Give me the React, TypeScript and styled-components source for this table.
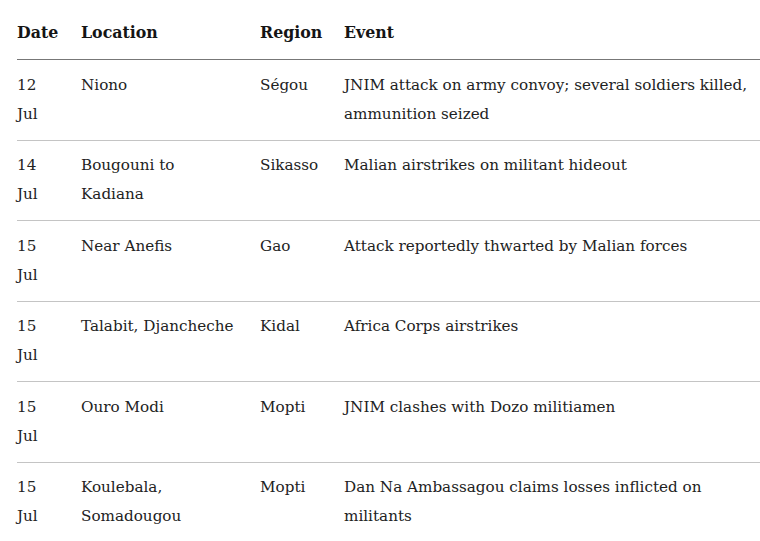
import React from 'react';
import styled, {createGlobalStyle} from 'styled-components';

const GlobalStyle = createGlobalStyle`
  html, body {
    margin: 0;
    padding: 0;
    background: #fff;
  }
  body {
    font-family: "DejaVu Serif", "Liberation Serif", serif;
    color: #222;
    overflow: hidden;
  }
`

type Row = {
    date: string
    location: string
    region: string
    event: string
}

const rows: Row[] = [
    {date: '12 Jul', location: 'Niono', region: 'Ségou', event: 'JNIM attack on army convoy; several soldiers killed, ammunition seized'},
    {date: '14 Jul', location: 'Bougouni to Kadiana', region: 'Sikasso', event: 'Malian airstrikes on militant hideout'},
    {date: '15 Jul', location: 'Near Anefis', region: 'Gao', event: 'Attack reportedly thwarted by Malian forces'},
    {date: '15 Jul', location: 'Talabit, Djancheche', region: 'Kidal', event: 'Africa Corps airstrikes'},
    {date: '15 Jul', location: 'Ouro Modi', region: 'Mopti', event: 'JNIM clashes with Dozo militiamen'},
    {date: '15 Jul', location: 'Koulebala, Somadougou', region: 'Mopti', event: 'Dan Na Ambassagou claims losses inflicted on militants'},
]

export default function App() {
    return (
        <Page>
            <GlobalStyle/>
            <Table>
                <colgroup>
                    <col style={{width: 64}}/>
                    <col style={{width: 179}}/>
                    <col style={{width: 84}}/>
                    <col/>
                </colgroup>
                <thead>
                    <tr>
                        <HeadCell>Date</HeadCell>
                        <HeadCell>Location</HeadCell>
                        <HeadCell>Region</HeadCell>
                        <HeadCell>Event</HeadCell>
                    </tr>
                </thead>
                <tbody>
                    {rows.map((r, i) => (
                        <BodyRow key={i}>
                            <Cell>{r.date}</Cell>
                            <Cell>{r.location}</Cell>
                            <Cell>{r.region}</Cell>
                            <Cell>{r.event}</Cell>
                        </BodyRow>
                    ))}
                </tbody>
            </Table>
        </Page>
    )
}

const Page = styled.div`
  padding: 0 0 0 17px;
  width: 760px;
  box-sizing: border-box;
`

const Table = styled.table`
  width: 743px;
  table-layout: fixed;
  border-collapse: collapse;
  font-size: 15.2px;
`

const HeadCell = styled.th`
  text-align: left;
  font-weight: bold;
  font-size: 15.8px;
  white-space: nowrap;
  line-height: 29px;
  padding: 18px 0 12px 0;
  border-bottom: 1px solid #777;
  color: #151515;
`

const BodyRow = styled.tr`
  border-bottom: 1px solid #c4c4c4;
  &:last-child {
    border-bottom: none;
  }
`

const Cell = styled.td`
  vertical-align: top;
  line-height: 29px;
  padding: 10.5px 22px 11px 0;
  &:last-child {
    padding-right: 0;
  }
`
